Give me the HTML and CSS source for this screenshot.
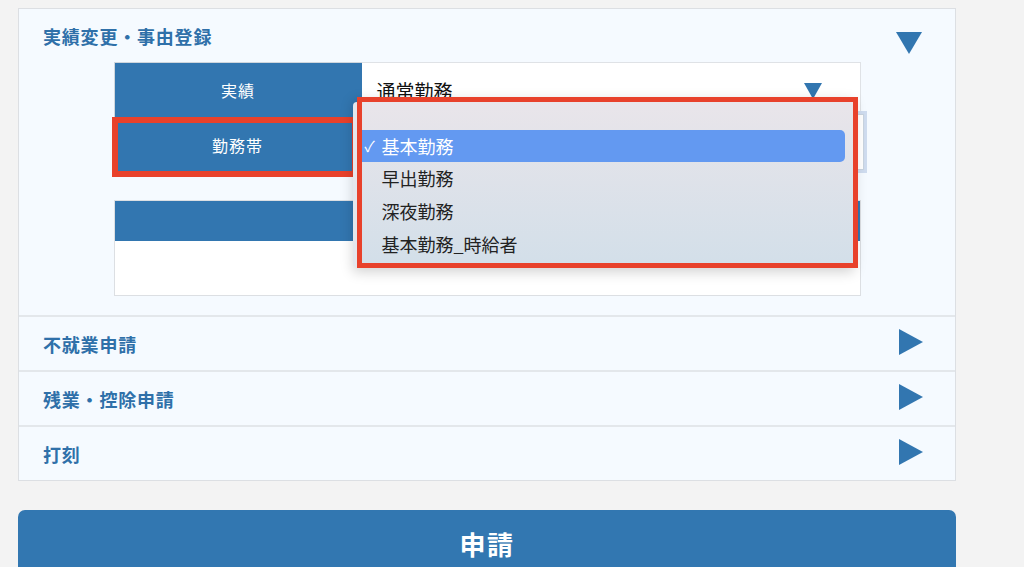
FILE: index.html
```html
<!DOCTYPE html>
<html lang="ja">
<head>
    <meta charset="UTF-8">
    <title>申請</title>
    <link rel="stylesheet" href="styles.css">
</head>
<body>
    <div class="page">
        <div class="panel">
            <section class="sec">
                <div class="sec-head">
                    <span class="sec-title">実績変更・事由登録</span>
                    <span class="tri-down"></span>
                </div>
                <div class="sec-body">
                    <div class="form-table">
                        <div class="row first">
                            <div class="label">実績</div>
                            <div class="value">
                                <span class="value-text">通常勤務</span>
                                <span class="caret"></span>
                            </div>
                        </div>
                        <div class="row">
                            <div class="label mark">勤務帯</div>
                            <div class="value">
                                <div class="select focus"></div>
                            </div>
                        </div>
                        <ul class="menu">
                            <li class="item empty"></li>
                            <li class="item selected">基本勤務</li>
                            <li class="item">早出勤務</li>
                            <li class="item">深夜勤務</li>
                            <li class="item">基本勤務_時給者</li>
                        </ul>
                    </div>
                    <div class="detail">
                        <div class="detail-head"></div>
                        <div class="detail-body"></div>
                    </div>
                </div>
            </section>
            <section class="sec">
                <div class="sec-head">
                    <span class="sec-title">不就業申請</span>
                    <span class="tri-right"></span>
                </div>
            </section>
            <section class="sec">
                <div class="sec-head">
                    <span class="sec-title">残業・控除申請</span>
                    <span class="tri-right"></span>
                </div>
            </section>
            <section class="sec">
                <div class="sec-head">
                    <span class="sec-title">打刻</span>
                    <span class="tri-right"></span>
                </div>
            </section>
        </div>
        <button class="submit" type="button">申請</button>
    </div>
</body>
</html>
```

FILE: styles.css
```css
* {
    box-sizing: border-box;
}
body {
    margin: 0;
    background-color: #f3f3f3;
    font-family: "Noto Sans CJK JP", "Noto Sans", sans-serif;
    overflow: hidden;
}
.page {
    width: 938px;
    margin-left: 18px;
    padding-top: 8px;
}
.panel {
    background-color: #f5faff;
    border: 1px solid #dcdfe3;
}
.sec + .sec {
    border-top: 2px solid #e3e7eb;
}
.sec-head {
    height: 53px;
    display: flex;
    align-items: center;
    justify-content: space-between;
    padding: 0 32px 0 24px;
}
.sec-title {
    color: #2f70a9;
    font-size: 18px;
    font-weight: bold;
    letter-spacing: 0.8px;
}
.tri-down {
    align-self: flex-start;
    margin-top: 23px;
    margin-right: 1px;
    width: 0;
    height: 0;
    border-left: 13px solid transparent;
    border-right: 13px solid transparent;
    border-top: 22px solid #3276b0;
}
.tri-right {
    width: 0;
    height: 0;
    margin-top: -4px;
    border-top: 13px solid transparent;
    border-bottom: 13px solid transparent;
    border-left: 24px solid #3276b0;
}
.sec-body {
    padding-bottom: 19px;
}
.form-table {
    position: relative;
    width: 747px;
    margin: 0 auto;
}
.row {
    display: grid;
    grid-template-columns: 248px 1fr;
    height: 55px;
}
.label {
    position: relative;
    display: flex;
    align-items: center;
    justify-content: center;
    background-color: #3276b0;
    color: #fff;
    font-size: 16px;
    letter-spacing: 1px;
}
.row.first .label {
    border-top: 1px solid #cfd6dd;
    border-left: 1px solid #cfd6dd;
}
.label.mark::after {
    content: "";
    position: absolute;
    left: -2px;
    top: 0;
    right: 4px;
    bottom: -5px;
    border: 6px solid #e8412b;
}
.value {
    display: flex;
    align-items: center;
    justify-content: space-between;
    background-color: #fff;
    border-top: 1px solid #dfe2e6;
    border-right: 1px solid #dfe2e6;
    padding: 0 38px 0 15px;
}
.value-text {
    font-size: 19px;
    color: #111;
}
.caret {
    align-self: flex-start;
    margin-top: 20px;
    width: 0;
    height: 0;
    border-left: 9px solid transparent;
    border-right: 9px solid transparent;
    border-top: 16px solid #3276b0;
}
.select {
    position: absolute;
    right: -3px;
    top: 52px;
    width: 480px;
    height: 56px;
    background-color: #fff;
    border: 1px solid #c9d4e0;
}
.select.focus {
    box-shadow: 0 0 0 3px #cfdcef;
}
.menu {
    position: absolute;
    left: 243px;
    top: 35px;
    width: 501px;
    height: 171px;
    margin: 0;
    padding: 0;
    list-style: none;
    border: 5px solid #e8412b;
    background: linear-gradient(#e9e5ea, #d3dfe9);
    box-shadow: -4px 4px 12px rgba(0, 0, 0, 0.18);
    z-index: 2;
}
.menu::before {
    content: "";
    position: absolute;
    left: -9px;
    top: 0;
    bottom: -4px;
    width: 4px;
    border-radius: 6px 0 0 6px;
    background-color: #e4e6ec;
}
.item {
    position: relative;
    height: 33px;
    line-height: 33px;
    margin-right: 8px;
    padding-left: 20px;
    font-size: 18px;
    color: #222;
}
.item.empty {
    height: 28px;
}
.item.selected {
    height: 32px;
    line-height: 32px;
    background-color: #6399f1;
    color: #fff;
    border-radius: 0 5px 5px 0;
}
.item.selected::before {
    content: "✓";
    position: absolute;
    left: 3px;
    font-size: 15px;
}
.detail {
    width: 747px;
    margin: 28px auto 0;
    border: 1px solid #dcdfe3;
}
.detail-head {
    height: 40px;
    background-color: #3276b0;
}
.detail-body {
    height: 54px;
    background-color: #fff;
}
.submit {
    display: block;
    width: 938px;
    height: 66px;
    margin-top: 29px;
    border: none;
    border-radius: 7px;
    background-color: #3277b1;
    color: #fff;
    font-family: inherit;
    font-size: 26px;
    font-weight: bold;
    letter-spacing: 1.5px;
}
```
